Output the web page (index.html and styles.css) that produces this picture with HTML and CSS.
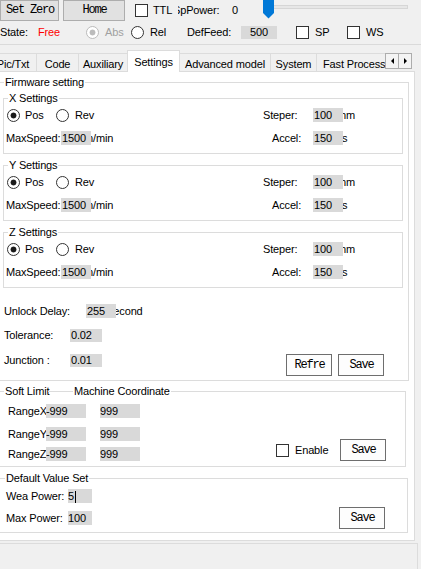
FILE: index.html
```html
<!DOCTYPE html>
<html>
<head>
<meta charset="utf-8">
<link rel="stylesheet" href="styles.css">
</head>
<body>
<div class="toolbar">
  <div class="tb-row tb-row1">
    <button class="btn btn-top btn-setzero">Set Zero</button>
    <button class="btn btn-top btn-home">Home</button>
    <span class="chk chk-ttl"></span>
    <span class="lbl-ttl">TTL</span>
    <span class="clip clip-sp"><span class="clip-inner">SpPower:</span></span>
    <span class="lbl-zero">0</span>
    <svg class="slider" width="152" height="21" viewBox="0 0 152 21">
      <rect x="14.5" y="5.5" width="135" height="3" fill="#e7e7e7" stroke="#d6d6d6"/>
      <path d="M5 -1H16V13L10.5 18.5L5 13Z" fill="#0078d7"/>
    </svg>
  </div>
  <div class="tb-row tb-row2">
    <span class="lbl-state">State:</span>
    <span class="lbl-free">Free</span>
    <span class="radio radio-dis"></span>
    <span class="lbl-abs">Abs</span>
    <span class="radio"></span>
    <span class="lbl-rel">Rel</span>
    <span class="lbl-deffeed">DefFeed:</span>
    <span class="field field-feed">500</span>
    <span class="chk chk-sp"></span>
    <span class="lbl-sp">SP</span>
    <span class="chk"></span>
    <span class="lbl-ws">WS</span>
  </div>
</div>

<div class="tabbar">
  <div class="tabstrip">
    <div class="tab tab-pic">Pic/Txt</div>
    <div class="tab tab-code">Code</div>
    <div class="tab tab-aux">Auxiliary</div>
    <div class="tab tab-active">Settings</div>
    <div class="tab tab-adv">Advanced model</div>
    <div class="tab tab-sys">System</div>
    <div class="tab tab-fast">Fast Processing</div>
  </div>
  <div class="tabscroll">
    <span class="sbtn"><span class="arrow-left"></span></span>
    <span class="sbtn sbtn-r"><span class="arrow-right"></span></span>
  </div>
</div>

<div class="page">
  <fieldset class="gb gb-outer gb-firmware">
    <legend>Firmware setting</legend>

    <fieldset class="gb gb-axis">
      <legend>X Settings</legend>
      <div class="axis-row axis-row1">
        <div class="axis-left axis-left-radio">
          <span class="radio radio-on"></span><span class="opt opt-pos">Pos</span>
          <span class="radio"></span><span class="opt opt-rev">Rev</span>
        </div>
        <span class="axis-lbl lbl-steper">Steper:</span>
        <span class="field field-axis">100</span>
        <span class="clip unit-mm"><span class="clip-inner">mm</span></span>
      </div>
      <div class="axis-row axis-row2">
        <div class="axis-left axis-left-speed">
          <span class="lbl-maxspeed">MaxSpeed:</span>
          <span class="field field-axis">1500</span>
          <span class="clip unit-min"><span class="clip-inner">m/min</span></span>
        </div>
        <span class="axis-lbl lbl-accel">Accel:</span>
        <span class="field field-axis">150</span>
        <span class="clip unit-s"><span class="clip-inner">ms</span></span>
      </div>
    </fieldset>

    <fieldset class="gb gb-axis">
      <legend>Y Settings</legend>
      <div class="axis-row axis-row1">
        <div class="axis-left axis-left-radio">
          <span class="radio radio-on"></span><span class="opt opt-pos">Pos</span>
          <span class="radio"></span><span class="opt opt-rev">Rev</span>
        </div>
        <span class="axis-lbl lbl-steper">Steper:</span>
        <span class="field field-axis">100</span>
        <span class="clip unit-mm"><span class="clip-inner">mm</span></span>
      </div>
      <div class="axis-row axis-row2">
        <div class="axis-left axis-left-speed">
          <span class="lbl-maxspeed">MaxSpeed:</span>
          <span class="field field-axis">1500</span>
          <span class="clip unit-min"><span class="clip-inner">m/min</span></span>
        </div>
        <span class="axis-lbl lbl-accel">Accel:</span>
        <span class="field field-axis">150</span>
        <span class="clip unit-s"><span class="clip-inner">ms</span></span>
      </div>
    </fieldset>

    <fieldset class="gb gb-axis">
      <legend>Z Settings</legend>
      <div class="axis-row axis-row1">
        <div class="axis-left axis-left-radio">
          <span class="radio radio-on"></span><span class="opt opt-pos">Pos</span>
          <span class="radio"></span><span class="opt opt-rev">Rev</span>
        </div>
        <span class="axis-lbl lbl-steper">Steper:</span>
        <span class="field field-axis">100</span>
        <span class="clip unit-mm"><span class="clip-inner">mm</span></span>
      </div>
      <div class="axis-row axis-row2">
        <div class="axis-left axis-left-speed">
          <span class="lbl-maxspeed">MaxSpeed:</span>
          <span class="field field-axis">1500</span>
          <span class="clip unit-min"><span class="clip-inner">m/min</span></span>
        </div>
        <span class="axis-lbl lbl-accel">Accel:</span>
        <span class="field field-axis">150</span>
        <span class="clip unit-s"><span class="clip-inner">ms</span></span>
      </div>
    </fieldset>

    <div class="fw-lower">
      <div class="fw-row">
        <span class="fw-lbl lbl-unlock">Unlock Delay:</span>
        <span class="field field-unlock">255</span>
        <span class="clip unit-sec"><span class="clip-inner">second</span></span>
      </div>
      <div class="fw-row fw-tol">
        <span class="fw-lbl lbl-tol">Tolerance:</span>
        <span class="field field-tol">0.02</span>
      </div>
      <div class="fw-row fw-junc">
        <span class="fw-lbl lbl-tol">Junction :</span>
        <span class="field field-tol">0.01</span>
        <div class="btn-group">
          <button class="btn btn-flat">Refre</button>
          <button class="btn btn-flat">Save</button>
        </div>
      </div>
    </div>
  </fieldset>

  <fieldset class="gb gb-outer gb-soft">
    <legend class="legend-soft"><span class="lg-t1">Soft Limit</span><span class="lg-line"></span><span>Machine Coordinate</span></legend>
    <div class="soft-body">
      <div class="range-col">
        <div class="range-row"><span class="range-lbl">RangeX</span><span class="field field-range">-999</span><span class="field field-range range-max">999</span></div>
        <div class="range-row range-row2"><span class="range-lbl">RangeY</span><span class="field field-range">-999</span><span class="field field-range range-max">999</span></div>
        <div class="range-row range-row3"><span class="range-lbl">RangeZ</span><span class="field field-range">-999</span><span class="field field-range range-max">999</span></div>
      </div>
      <div class="soft-right">
        <span class="chk"></span>
        <span class="lbl-enable">Enable</span>
        <button class="btn btn-flat">Save</button>
      </div>
    </div>
  </fieldset>

  <fieldset class="gb gb-outer gb-default">
    <legend>Default Value Set</legend>
    <div class="def-body">
      <div class="def-col">
        <div class="def-row"><span class="def-lbl">Wea Power:</span><span class="field field-def">5<span class="caret"></span></span></div>
        <div class="def-row def-row2"><span class="def-lbl">Max Power:</span><span class="field field-def">100</span></div>
      </div>
      <button class="btn btn-flat def-save">Save</button>
    </div>
  </fieldset>
</div>

<div class="status"></div>
</body>
</html>
```

FILE: styles.css
```css
* { box-sizing: border-box; }
html, body { margin: 0; padding: 0; }
body {
  width: 421px;
  height: 569px;
  overflow: hidden;
  background: #f0f0f0;
  font-family: "Liberation Sans", Arial, sans-serif;
  font-size: 11px;
  letter-spacing: -0.15px;
  line-height: 13px;
  color: #000;
}

/* ---------- toolbar ---------- */
.toolbar { height: 45px; border-bottom: 1px solid #dadada; }
.tb-row { display: flex; align-items: center; white-space: nowrap; }
.tb-row > * { flex: none; }
.tb-row1 { height: 21px; }
.tb-row2 { height: 23px; }

.btn {
  font-family: "Liberation Mono", "DejaVu Sans Mono", monospace;
  font-size: 12px;
  letter-spacing: -1.2px;
  line-height: 13px;
  padding: 0 0 0 1px;
  color: #000;
  flex: none;
}
.btn-top { height: 21px; background: #e1e1e1; border: 1px solid #adadad; }
.btn-setzero { width: 59px; }
.btn-home { width: 62px; margin-left: 4px; }

.chk { display: block; width: 13px; height: 13px; border: 1px solid #333; background: #fff; flex: none; }
.chk-ttl { margin-left: 10px; }
.lbl-ttl { margin-left: 5px; width: 25px; }

.clip { display: block; overflow: hidden; white-space: nowrap; flex: none; }
.clip-inner { display: inline-block; }
.clip-sp { width: 54px; }
.clip-sp .clip-inner { margin-left: -5px; }
.lbl-zero { width: 26px; }
.slider { display: block; }

.lbl-state { width: 38px; }
.lbl-free { width: 48px; color: #ff0000; }
.radio { display: block; width: 13px; height: 13px; border-radius: 50%; border: 1px solid #333; background: #fff; flex: none; }
.radio-on { background: radial-gradient(circle, #1a1a1a 0, #1a1a1a 2.6px, #fff 3.3px); }
.radio-dis { border-color: #bcbcbc; background: radial-gradient(circle, #bcbcbc 0, #bcbcbc 2.6px, #fff 3.3px); }
.lbl-abs { margin-left: 6px; width: 26px; color: #a0a0a0; }
.lbl-rel { margin-left: 6px; width: 37px; }
.lbl-deffeed { width: 54px; }
.chk-sp { margin-left: 19px; }
.lbl-sp { margin-left: 6px; width: 32px; }
.lbl-ws { margin-left: 6px; }

.field {
  display: block;
  flex: none;
  background: #d9d9d9;
  height: 13px;
  line-height: 13px;
  white-space: nowrap;
  overflow: hidden;
  padding-left: 1px;
}
.field-feed { width: 36px; text-align: center; padding: 0; }

/* ---------- tabs ---------- */
.tabbar { display: flex; height: 27px; margin-bottom: -1px; position: relative; z-index: 1; }
.tabstrip { display: flex; align-items: flex-end; width: 385px; overflow: hidden; flex: none; }
.tab {
  flex: none;
  height: 18px;
  margin-bottom: 1px;
  border-top: 1px solid #dcdcdc;
  border-right: 1px solid #dcdcdc;
  background: #f0f0f0;
  display: flex;
  justify-content: center;
  align-items: center;
  padding-top: 3px;
  white-space: nowrap;
}
.tab-pic { width: 47px; margin-left: -10px; }
.tab-code { width: 42px; }
.tab-aux { width: 49px; }
.tab-active {
  width: 53px;
  height: 22px;
  margin-bottom: 0;
  margin-left: -1px;
  background: #fff;
  border: 1px solid #dcdcdc;
  border-bottom: none;
  padding-top: 1px;
}
.tab-adv { width: 91px; }
.tab-sys { width: 46px; }
.tab-fast { width: 100px; justify-content: flex-start; padding-left: 6px; }

.tabscroll { display: flex; margin-top: 8px; height: 16px; flex: none; }
.sbtn { display: flex; align-items: center; justify-content: center; width: 14px; height: 16px; border: 1px solid #adadad; background: #f4f4f4; }
.sbtn-r { width: 13px; border-left: none; }
.arrow-left { width: 0; height: 0; border-right: 3px solid #000; border-top: 3px solid transparent; border-bottom: 3px solid transparent; }
.arrow-right { width: 0; height: 0; border-left: 3px solid #000; border-top: 3px solid transparent; border-bottom: 3px solid transparent; }

/* ---------- page ---------- */
.page {
  width: 415px;
  height: 470px;
  background: #fff;
  border: 1px solid #dcdcdc;
  border-left: none;
  padding-top: 4px;
  overflow: hidden;
}

.gb { margin: 0; padding: 0; border: 1px solid #dcdcdc; min-width: 0; }
.gb > legend { padding: 0 1px; height: 13px; line-height: 13px; white-space: nowrap; }
.gb-outer { border-left: none; }

.gb-firmware { width: 409px; }
.gb-firmware > legend { margin-left: 4px; }

.gb-axis { width: 400px; margin: 3px 0 0 3px; padding-bottom: 7px; }
.gb-axis + .gb-axis { margin-top: 5px; }
.gb-axis > legend { margin-left: 4px; }

.axis-row { display: grid; grid-template-columns: 246px 63px 30px 1fr; align-items: center; height: 16px; }
.axis-row1 { margin-top: 2px; }
.axis-row2 { margin-top: 7px; }
.axis-left { display: flex; align-items: center; white-space: nowrap; }
.axis-left > * { flex: none; }
.axis-left-radio { padding-left: 3px; }
.axis-left-speed { padding-left: 2px; }
.opt { margin-left: 5px; }
.opt-pos { width: 31px; }
.opt-rev { margin-left: 6px; }
.lbl-maxspeed { width: 55px; }
.axis-lbl { display: block; white-space: nowrap; }
.lbl-steper { padding-left: 13px; }
.lbl-accel { padding-left: 22px; }
.field-axis { width: 30px; height: 14px; line-height: 14px; }
.unit-mm { width: 20px; }
.unit-mm .clip-inner { margin-left: -6px; }
.unit-min { width: 30px; }
.unit-min .clip-inner { margin-left: -7px; }
.unit-s { width: 10px; }
.unit-s .clip-inner { margin-left: -10px; }

.fw-lower { padding: 16px 24px 4px 4px; }
.fw-row { display: flex; align-items: center; height: 14px; white-space: nowrap; }
.fw-row > * { flex: none; }
.fw-tol { margin-top: 10px; }
.fw-junc { margin-top: 11px; height: 23px; align-items: flex-start; }
.fw-lbl { line-height: 14px; }
.lbl-unlock { width: 82px; }
.lbl-tol { width: 66px; }
.field-unlock { width: 30px; height: 14px; line-height: 14px; }
.field-tol { width: 32px; }
.fw-junc .field-tol { margin-top: 1px; }
.unit-sec { width: 40px; }
.unit-sec .clip-inner { margin-left: -8px; }
.btn-group { display: flex; gap: 6px; margin-left: auto; margin-top: 1px; }
.btn-flat { width: 46px; height: 22px; background: #fdfdfd; border: 1px solid #6e6e6e; }

.gb-soft { width: 406px; margin-top: 4px; }
.legend-soft { display: flex; align-items: center; margin-left: 4px; }
.lg-t1 { width: 43px; }
.lg-line { width: 25px; height: 1px; background: #dcdcdc; margin-right: 1px; }
.soft-body { display: flex; align-items: flex-end; padding: 6px 19px 5px 8px; }
.range-row { display: flex; align-items: center; height: 14px; white-space: nowrap; }
.range-row > * { flex: none; }
.range-row2 { margin-top: 9px; }
.range-row3 { margin-top: 6px; }
.range-lbl { width: 38px; }
.field-range { width: 40px; height: 14px; line-height: 14px; padding-left: 0; }
.range-max { margin-left: 14px; }
.soft-right { margin-left: auto; display: flex; align-items: center; }
.lbl-enable { margin-left: 6px; width: 45px; }

.gb-default { width: 408px; margin-top: 5px; }
.gb-default > legend { margin-left: 5px; }
.def-body { display: flex; align-items: flex-end; padding: 4px 22px 3px 6px; }
.def-col { padding-bottom: 4px; }
.def-row { display: flex; align-items: center; height: 14px; white-space: nowrap; }
.def-row > * { flex: none; }
.def-row2 { margin-top: 8px; }
.def-lbl { width: 62px; }
.field-def { width: 24px; height: 14px; line-height: 14px; padding-left: 0; }
.caret { display: inline-block; width: 1px; height: 12px; background: #000; vertical-align: middle; margin-left: 1px; }
.def-save { margin-left: auto; }

.status { margin-top: 2px; width: 418px; height: 26px; border-top: 1px solid #dcdcdc; border-right: 1px solid #dcdcdc; }
```
